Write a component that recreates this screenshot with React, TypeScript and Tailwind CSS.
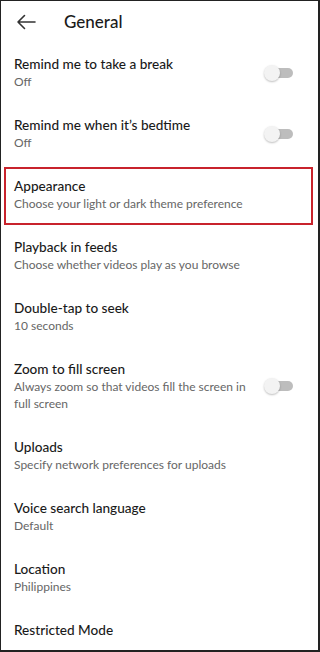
import React from "react";

const Toggle = () => (
  <div className="relative w-[30px] h-[16px] shrink-0 mr-[22px]">
    <div className="absolute right-[1px] top-[3px] w-[22px] h-[10px] rounded-full bg-[#bdbdbd]" />
    <div className="absolute left-0 top-0 w-[16px] h-[16px] rounded-full bg-[#f3f3f3] shadow-[0_1px_2px_rgba(0,0,0,0.25)]" />
  </div>
);

type Item = { title: string; sub?: string[]; toggle?: boolean; highlight?: boolean };

const items: Item[] = [
  { title: "Remind me to take a break", sub: ["Off"], toggle: true },
  { title: "Remind me when it’s bedtime", sub: ["Off"], toggle: true },
  { title: "Appearance", sub: ["Choose your light or dark theme preference"], highlight: true },
  { title: "Playback in feeds", sub: ["Choose whether videos play as you browse"] },
  { title: "Double-tap to seek", sub: ["10 seconds"] },
  { title: "Zoom to fill screen", sub: ["Always zoom so that videos fill the screen in", "full screen"], toggle: true },
  { title: "Uploads", sub: ["Specify network preferences for uploads"] },
  { title: "Voice search language", sub: ["Default"] },
  { title: "Location", sub: ["Philippines"] },
  { title: "Restricted Mode" },
];

const Text = ({ it }: { it: Item }) => (
  <div className="flex-1 min-w-0">
    <div className="text-[13.6px] leading-[18px] text-[#1a1a1a] font-medium">{it.title}</div>
    {it.sub?.map((s) => (
      <div key={s} className="text-[12px] leading-[17px] text-[#666]">{s}</div>
    ))}
  </div>
);

export default function App() {
  return (
    <div
      className="w-[320px] h-[652px] overflow-hidden bg-white border-l border-t border-r-2 border-b-2 border-[#222] flex flex-col"
      style={{ fontFamily: "Lato, 'Noto Sans', sans-serif" }}
    >
      <div className="h-[41px] shrink-0 flex items-center">
        <svg width="20" height="16" viewBox="0 0 20 16" className="ml-[15px]" fill="none" stroke="#333" strokeWidth="1.6" strokeLinecap="round" strokeLinejoin="round">
          <path d="M19 8H2M8.5 1.5L2 8l6.5 6.5" />
        </svg>
        <span className="ml-[28px] text-[17px] leading-[20px] text-[#1a1a1a] font-medium">General</span>
      </div>
      {items.map((it) =>
        it.highlight ? (
          <div key={it.title} className="shrink-0 h-[61px] px-[2px] pt-[3px]">
            <div className="h-[58px] ml-[1px] mr-[3px] border-2 border-[#c8232c] flex items-start pt-[8px] pl-[8px]">
              <Text it={it} />
            </div>
          </div>
        ) : (
          <div key={it.title} className="shrink-0 px-[2px]">
            <div className="flex items-center py-[13px] pl-[11px]">
              <Text it={it} />
              {it.toggle && <Toggle />}
            </div>
          </div>
        )
      )}
    </div>
  );
}
